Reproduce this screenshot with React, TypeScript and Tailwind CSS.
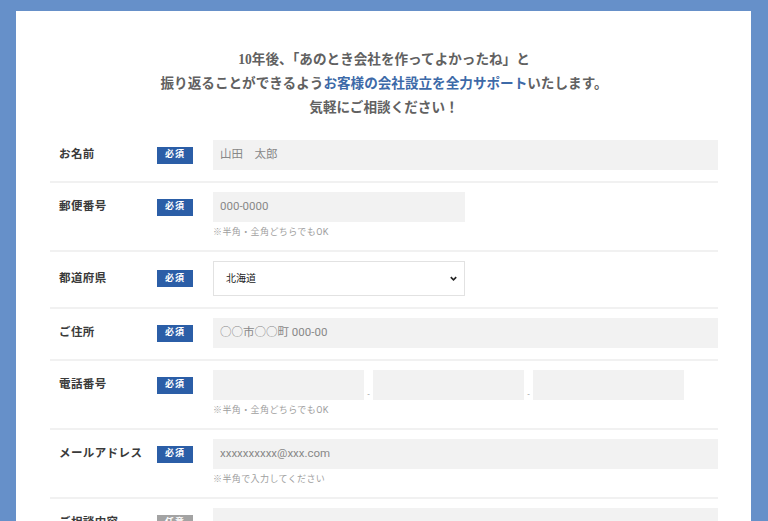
import { ReactNode } from "react";

const serif = { fontFamily: '"Liberation Serif", "Noto Sans CJK JP", serif' };
const sans = { fontFamily: 'Roboto, "Noto Sans CJK JP", sans-serif' };

// Small badge next to each label
const Badge = ({ required = true }: { required?: boolean }) => (
  <span
    className={`flex h-[17px] w-[36px] items-center justify-center text-[9px] font-bold tracking-[1px] text-white ${
      required ? "bg-[#2b5ea7]" : "bg-[#a3a3a3]"
    }`}
    style={sans}
  >
    {required ? "必須" : "任意"}
  </span>
);

interface IRow {
  label: string;
  required?: boolean;
  fieldHeight?: string;
  note?: string;
  children: ReactNode;
}

const Row = ({ label, required = true, fieldHeight = "h-[30px]", note, children }: IRow) => (
  <div className="flex items-start border-b-2 border-[#f1f1f1] pt-[9px] pb-[11px]">
    <div className={`flex w-[107px] shrink-0 items-center pl-[9px] ${fieldHeight}`}>
      <span className="text-[11.5px] font-bold tracking-[0.4px] text-[#3a3a3a]" style={serif}>
        {label}
      </span>
    </div>
    <div className={`flex w-[56px] shrink-0 items-center ${fieldHeight}`}>
      <Badge required={required} />
    </div>
    <div className="flex-1">
      {children}
      {note && (
        <p className="mt-[4px] text-[9px] leading-[13px] tracking-[0.4px] text-[#a0a0a0]" style={sans}>
          {note}
        </p>
      )}
    </div>
  </div>
);

const Field = ({ value, className = "w-full" }: { value?: string; className?: string }) => (
  <div
    className={`flex h-[30px] items-center bg-[#f2f2f2] pl-[7px] text-[11.5px] text-[#888] ${className}`}
    style={sans}
  >
    {value}
  </div>
);

export default function App() {
  return (
    <div className="min-h-screen overflow-hidden bg-[#6690c9] pt-[11px] pl-[16px]">
      <div className="w-[735px] bg-white pt-[37px] pr-[33px] pb-[40px] pl-[34px]">
        <div
          className="mb-[11px] text-center text-[13.6px] font-semibold leading-[24px] text-[#616161]"
          style={serif}
        >
          <p>10年後、「あのとき会社を作ってよかったね」と</p>
          <p>
            振り返ることができるよう
            <span className="text-[#3d6aa8]">お客様の会社設立を全力サポート</span>
            いたします。
          </p>
          <p>気軽にご相談ください！</p>
        </div>

        <Row label="お名前">
          <Field value="山田　太郎" />
        </Row>

        <Row label="郵便番号" note="※半角・全角どちらでもOK">
          <Field value="000-0000" className="w-[252px]" />
        </Row>

        <Row label="都道府県" fieldHeight="h-[35px]">
          <div
            className="flex h-[35px] w-[252px] items-center justify-between border border-[#e2e2e2] bg-white pr-[6px] pl-[12px] text-[10px] text-[#222]"
            style={sans}
          >
            <span>北海道</span>
            <svg width="9" height="9" viewBox="0 0 10 10">
              <path d="M2 3.5 L5 6.5 L8 3.5" fill="none" stroke="#222" strokeWidth="1.8" />
            </svg>
          </div>
        </Row>

        <Row label="ご住所">
          <Field value="○○市○○町 000-00" />
        </Row>

        <Row label="電話番号" note="※半角・全角どちらでもOK">
          <div className="flex items-end">
            <Field className="w-[151px]" />
            <span className="w-[9px] text-center text-[8px] leading-[12px] text-[#aaa]">-</span>
            <Field className="w-[151px]" />
            <span className="w-[9px] text-center text-[8px] leading-[12px] text-[#aaa]">-</span>
            <Field className="w-[151px]" />
          </div>
        </Row>

        <Row label="メールアドレス" note="※半角で入力してください">
          <Field value="xxxxxxxxxx@xxx.com" />
        </Row>

        <Row label="ご相談内容" required={false}>
          <div className="h-[150px] w-full bg-[#f2f2f2]" />
        </Row>
      </div>
    </div>
  );
}
